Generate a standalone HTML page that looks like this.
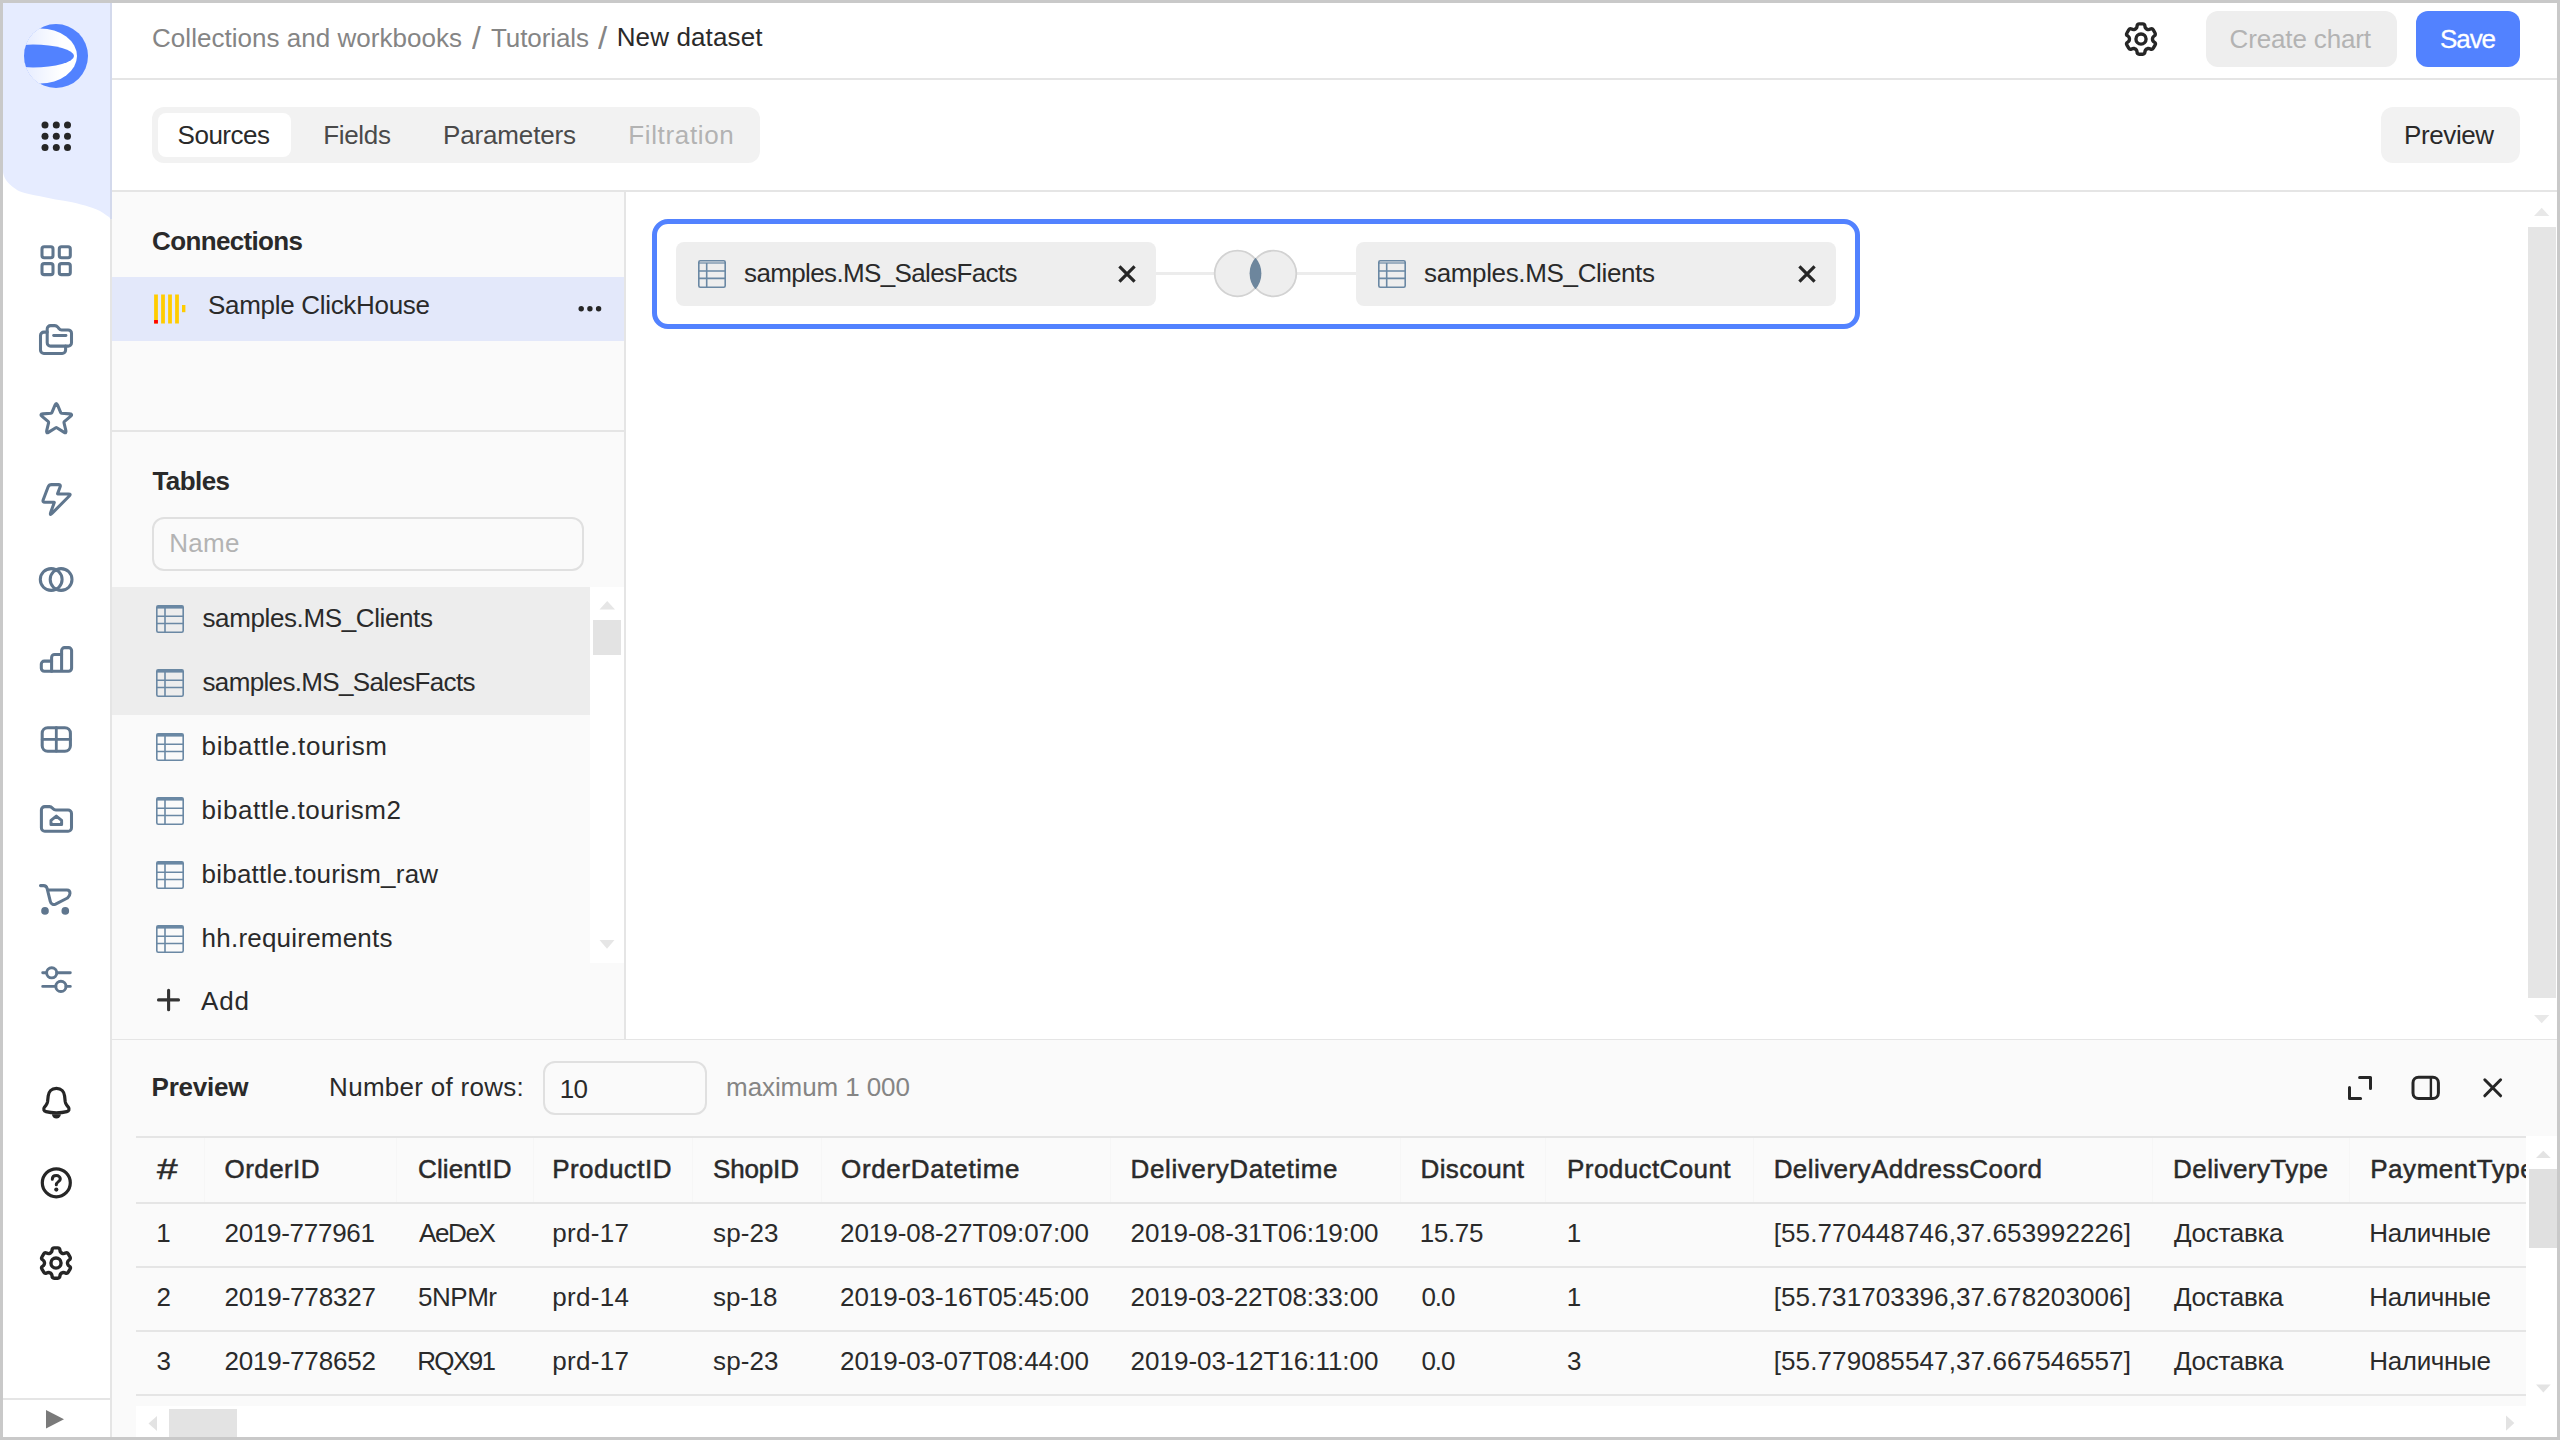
<!DOCTYPE html>
<html lang="en"><head><meta charset="utf-8"><title>New dataset</title>
<style>

*{box-sizing:border-box;margin:0;padding:0}
html,body{width:2560px;height:1440px;overflow:hidden;background:#c9c9c9}
body{font-family:"Liberation Sans","DejaVu Sans",sans-serif;font-size:26px;color:#262626}
#app{position:absolute;left:3px;top:3px;width:2554px;height:1434px;background:#fff;overflow:hidden}
/* everything inside is positioned in page coordinates: shift by -3 */
#app>*{position:absolute}
.abs{position:absolute}
.t{position:absolute;white-space:pre;margin-left:-3px;margin-top:-3px}
.b{position:absolute;margin-left:-3px;margin-top:-3px}
svg{position:absolute;overflow:visible;margin-left:-3px;margin-top:-3px}
.ln{background:#e5e5e5}

</style></head>
<body>
<div id="app">
<!-- sidebar -->
<div class="b" style="left:3px;top:3px;width:109px;height:1434px;background:#fff;border-right:2px solid #e5e5e5"></div>
<svg style="left:0;top:0" width="112" height="1440" viewBox="0 0 112 1440" fill="none">
<defs><linearGradient id="lg" x1="24" y1="0" x2="62" y2="0" gradientUnits="userSpaceOnUse"><stop offset="0" stop-color="#e6ecff"/><stop offset="1" stop-color="#ffffff"/></linearGradient><clipPath id="lc"><circle cx="56" cy="56" r="32"/></clipPath></defs>
<path d="M3 166C3.1 167.3 2.8 171.5 3.4 174C4.0 176.5 5.0 178.7 6.7 181C8.4 183.3 11.3 185.9 13.9 187.8C16.5 189.7 18.0 190.8 22.2 192.2C26.4 193.6 33.3 194.9 38.9 196.1C44.5 197.3 50.0 198.4 55.6 199.4C61.2 200.4 66.7 201.0 72.2 202.2C77.8 203.4 84.3 205.2 88.9 206.7C93.5 208.2 96.2 209.0 100 211.1C103.8 213.2 110.0 218.0 112 219.4V3H3Z" fill="#e6ecff"/>
<rect x="110" y="3" width="2" height="216" fill="#d3d9ec"/>
<g clip-path="url(#lc)"><rect x="24" y="24" width="64" height="64" fill="#5282ff"/><rect x="24" y="24" width="16.500" height="64" fill="url(#lg)"/><ellipse cx="40" cy="56" rx="37" ry="27.500" fill="url(#lg)"/><ellipse cx="33" cy="56" rx="41" ry="11.400" fill="#5282ff"/></g>
<circle cx="45" cy="125" r="3.5" fill="#262626"/>
<circle cx="56.3" cy="125" r="3.5" fill="#262626"/>
<circle cx="67.5" cy="125" r="3.5" fill="#262626"/>
<circle cx="45" cy="136.3" r="3.5" fill="#262626"/>
<circle cx="56.3" cy="136.3" r="3.5" fill="#262626"/>
<circle cx="67.5" cy="136.3" r="3.5" fill="#262626"/>
<circle cx="45" cy="147.5" r="3.5" fill="#262626"/>
<circle cx="56.3" cy="147.5" r="3.5" fill="#262626"/>
<circle cx="67.5" cy="147.5" r="3.5" fill="#262626"/>
<g stroke="#5f768e" stroke-width="3.05" stroke-linecap="round" stroke-linejoin="round">
<rect x="42" y="246.7" width="11" height="11" rx="2.2"/>
<rect x="59.3" y="246.7" width="11" height="11" rx="2.2"/>
<rect x="42" y="263.6" width="11" height="11" rx="2.2"/>
<rect x="59.3" y="263.6" width="11" height="11" rx="2.2"/>
<path d="M50.6 325.600H54.9C56 325.600 56.9 326.100 57.6 326.900L58.9 328.500C59.6 329.400 60.5 329.900 61.6 329.900H68.1A3.4 3.4 0 0 1 71.5 333.300V342.700A3.4 3.400 0 0 1 68.1 346.100H50.6A3.4 3.400 0 0 1 47.2 342.700V329A3.4 3.400 0 0 1 50.6 325.600Z"/>
<path d="M47.2 332.100H43.900A3.4 3.400 0 0 0 40.5 335.500V350A3.4 3.400 0 0 0 43.9 353.400H62.2A3.4 3.400 0 0 0 65.6 350V346.100"/>
<path d="M53.6 335.500H66" stroke-width="2.800"/>
<path d="M55.01 405.05Q56.30 401.90 57.59 405.05L60.72 412.65Q60.94 413.21 61.54 413.25L69.74 413.87Q73.13 414.13 70.54 416.33L64.27 421.65Q63.81 422.04 63.96 422.62L65.90 430.62Q66.70 433.92 63.81 432.13L56.81 427.82Q56.30 427.50 55.79 427.82L48.79 432.13Q45.90 433.92 46.70 430.62L48.64 422.62Q48.79 422.04 48.33 421.65L42.06 416.33Q39.47 414.13 42.86 413.87L51.06 413.25Q51.66 413.21 51.88 412.65Z"/>
<path d="M48.07 487.03Q49.00 484.60 51.60 484.60L58.40 484.60Q61.00 484.60 60.08 487.03L57.61 493.62Q57.50 493.90 57.80 493.90L68.40 493.90Q71.40 493.90 69.28 496.03L52.22 513.17Q49.40 516.00 50.76 512.24L54.30 502.48Q54.40 502.20 54.10 502.20L44.90 502.20Q42.30 502.20 43.23 499.77Z"/>
<circle cx="51.2" cy="579.5" r="10.9"/><circle cx="61.1" cy="579.5" r="10.9"/>
<path d="M51.6 661.100H44.3A3 3 0 0 0 41.3 664.100V668.300A3 3 0 0 0 44.3 671.300H68.600A3 3 0 0 0 71.6 668.300V650.600A3 3 0 0 0 68.600 647.600H64.600A3 3 0 0 0 61.6 650.600V671.300"/>
<path d="M61.6 654.400H54.600A3 3 0 0 0 51.6 657.400V671.300"/>
<rect x="42.2" y="727.700" width="28.2" height="23.5" rx="5.500"/><path d="M56.3 727.700V751.200M42.2 739.400H70.400" stroke-width="2.800"/>
<path d="M44.8 806.600H49.5C50.6 806.600 51.6 807.100 52.3 807.900L53.100 808.800C53.8 809.600 54.8 810 55.9 810H68.100A3.4 3.400 0 0 1 71.5 813.400V827.800A3.4 3.400 0 0 1 68.100 831.200H44.8A3.4 3.400 0 0 1 41.4 827.800V810A3.4 3.400 0 0 1 44.8 806.600Z"/>
<path d="M51 824.600V820.400L56.3 816.100L61.6 820.400V824.600Z" stroke-width="3"/>
<path d="M40.5 885.600H43.600C45.6 885.600 46.6 886.600 47.100 888.400L50.3 901.400C51 904.200 53.3 905.200 55.6 904.100L67.5 898C69.2 896.600 70 895.200 70 893.300C70 891.200 68.8 890 67 890H47.600"/>
<circle cx="45" cy="910.900" r="2.3" fill="#5f768e"/><circle cx="65.3" cy="910.900" r="2.3" fill="#5f768e"/>
<g stroke-width="2.900"><path d="M42.7 972.800H46.600M56.800 972.800H70.300M42.7 986.400H55.800M66 986.400H70.300"/><circle cx="51.7" cy="972.800" r="5.100"/><circle cx="60.9" cy="986.400" r="5.100"/></g>
</g>
<g stroke="#262626" stroke-width="3.2" stroke-linecap="round" stroke-linejoin="round">
<path d="M56.4 1088.300C51.4 1088.300 48.6 1091.700 48.2 1096L47.6 1101.500C47.4 1103 46.9 1104 46 1105.200L44.4 1107.300C43 1109.200 43.8 1111 46 1111.600C49 1112.400 52.6 1112.800 56.4 1112.800C60.2 1112.800 63.8 1112.400 66.8 1111.600C69 1111 69.8 1109.200 68.4 1107.300L66.8 1105.200C65.9 1104 65.4 1103 65.2 1101.500L64.6 1096C64.2 1091.700 61.4 1088.300 56.4 1088.300Z"/>
<path d="M52 1114.200A4.4 4.400 0 0 0 60.8 1114.200Z" fill="#262626" stroke="none"/>
<circle cx="56.3" cy="1182.800" r="14"/>
<path d="M52.3 1179.300C52.3 1176.900 54 1175.600 56.3 1175.600C58.6 1175.600 60.3 1177 60.3 1179C60.3 1181.600 56.3 1181.800 56.3 1184.800" stroke-width="3"/>
<circle cx="56.3" cy="1189.600" r="2.100" fill="#262626" stroke="none"/>
</g>
<path transform="translate(38 1245) scale(2.25)" fill="#262626" fill-rule="evenodd" clip-rule="evenodd" d="M7.199 2H8.8a.2.2 0 0 1 .2.2c0 1.808 1.958 2.939 3.524 2.034a.199.199 0 0 1 .271.073l.802 1.388a.199.199 0 0 1-.073.272c-1.566.904-1.566 3.164 0 4.069a.199.199 0 0 1 .073.271l-.802 1.388a.199.199 0 0 1-.271.073C10.958 10.863 9 11.993 9 13.8a.2.2 0 0 1-.199.2H7.2a.199.199 0 0 1-.2-.2c0-1.808-1.958-2.938-3.524-2.034a.199.199 0 0 1-.272-.073l-.8-1.388a.199.199 0 0 1 .072-.271c1.566-.905 1.566-3.165 0-4.07a.199.199 0 0 1-.073-.271l.801-1.388a.199.199 0 0 1 .272-.073C5.042 5.138 7 4.007 7 2.2c0-.11.089-.199.199-.199ZM5.5 2.2c0-.94.76-1.7 1.699-1.7H8.8c.94 0 1.7.76 1.7 1.7a.85.85 0 0 0 1.274.735 1.699 1.699 0 0 1 2.32.622l.802 1.388c.469.813.19 1.851-.622 2.32a.85.85 0 0 0 0 1.472 1.7 1.7 0 0 1 .622 2.32l-.802 1.388a1.699 1.699 0 0 1-2.32.622.85.85 0 0 0-1.274.735c0 .939-.76 1.7-1.699 1.7H7.2a1.7 1.7 0 0 1-1.699-1.7.85.85 0 0 0-1.274-.735 1.698 1.698 0 0 1-2.32-.622l-.802-1.388a1.699 1.699 0 0 1 .622-2.32.85.85 0 0 0 0-1.471 1.699 1.699 0 0 1-.622-2.321l.801-1.388a1.699 1.699 0 0 1 2.32-.622A.85.85 0 0 0 5.5 2.2Zm4 5.8a1.5 1.5 0 1 1-3 0 1.5 1.5 0 0 1 3 0ZM11 8a3 3 0 1 1-6 0 3 3 0 0 1 6 0Z"/>
<rect x="3" y="1398" width="107" height="2" fill="#e5e5e5"/>
<path d="M46 1410L64 1419.300L46 1428.500Z" fill="#7a7a7a"/>
</svg>
<!-- header -->
<div class="b ln" style="left:112px;top:78px;width:2445px;height:2px;"></div>
<svg style="left:2123px;top:21px" width="36" height="36" viewBox="0 0 16 16"><path fill="#262626" fill-rule="evenodd" clip-rule="evenodd" d="M7.199 2H8.8a.2.2 0 0 1 .2.2c0 1.808 1.958 2.939 3.524 2.034a.199.199 0 0 1 .271.073l.802 1.388a.199.199 0 0 1-.073.272c-1.566.904-1.566 3.164 0 4.069a.199.199 0 0 1 .073.271l-.802 1.388a.199.199 0 0 1-.271.073C10.958 10.863 9 11.993 9 13.8a.2.2 0 0 1-.199.2H7.2a.199.199 0 0 1-.2-.2c0-1.808-1.958-2.938-3.524-2.034a.199.199 0 0 1-.272-.073l-.8-1.388a.199.199 0 0 1 .072-.271c1.566-.905 1.566-3.165 0-4.07a.199.199 0 0 1-.073-.271l.801-1.388a.199.199 0 0 1 .272-.073C5.042 5.138 7 4.007 7 2.2c0-.11.089-.199.199-.199ZM5.5 2.2c0-.94.76-1.7 1.699-1.7H8.8c.94 0 1.7.76 1.7 1.7a.85.85 0 0 0 1.274.735 1.699 1.699 0 0 1 2.32.622l.802 1.388c.469.813.19 1.851-.622 2.32a.85.85 0 0 0 0 1.472 1.7 1.7 0 0 1 .622 2.32l-.802 1.388a1.699 1.699 0 0 1-2.32.622.85.85 0 0 0-1.274.735c0 .939-.76 1.7-1.699 1.7H7.2a1.7 1.7 0 0 1-1.699-1.7.85.85 0 0 0-1.274-.735 1.698 1.698 0 0 1-2.32-.622l-.802-1.388a1.699 1.699 0 0 1 .622-2.32.85.85 0 0 0 0-1.471 1.699 1.699 0 0 1-.622-2.321l.801-1.388a1.699 1.699 0 0 1 2.32-.622A.85.85 0 0 0 5.5 2.2Zm4 5.8a1.5 1.5 0 1 1-3 0 1.5 1.5 0 0 1 3 0ZM11 8a3 3 0 1 1-6 0 3 3 0 0 1 6 0Z"/></svg>
<div class="b" style="left:2206px;top:11px;width:191px;height:56px;background:#eeeeee;border-radius:12px"></div>
<div class="b" style="left:2416px;top:11px;width:104px;height:56px;background:#5282ff;border-radius:12px"></div>
<!-- tabs -->
<div class="b" style="left:152px;top:107px;width:608px;height:56px;background:#f2f2f2;border-radius:12px"></div>
<div class="b" style="left:158px;top:113px;width:133px;height:44px;background:#fff;border-radius:8px"></div>
<div class="b" style="left:2381px;top:107px;width:139px;height:56px;background:#f2f2f2;border-radius:12px"></div>
<div class="b ln" style="left:112px;top:190px;width:2445px;height:2px;"></div>
<!-- left panel -->
<div class="b" style="left:112px;top:192px;width:512px;height:847px;background:#fafafa"></div>
<div class="b ln" style="left:624px;top:192px;width:2px;height:847px;"></div>
<div class="b" style="left:112px;top:277px;width:512px;height:64px;background:#e3e8fa"></div>
<svg style="left:154px;top:294px" width="32" height="30" viewBox="154 294 32 30"><rect x="154.1" y="294.500" width="3.800" height="29" fill="#ffcc00"/><rect x="161.1" y="294.500" width="3.800" height="29" fill="#ffcc00"/><rect x="168.1" y="294.500" width="3.800" height="29" fill="#ffcc00"/><rect x="175.1" y="294.500" width="3.800" height="29" fill="#ffcc00"/><rect x="182" y="305" width="3.400" height="7.200" fill="#ffcc00"/><rect x="154.1" y="320" width="3.800" height="3.500" fill="#ff0000"/></svg>
<svg style="left:576px;top:300px" width="28" height="18" viewBox="576 300 28 18"><circle cx="581.2" cy="308.800" r="2.700" fill="#262626"/><circle cx="589.9" cy="308.800" r="2.700" fill="#262626"/><circle cx="598.6" cy="308.800" r="2.700" fill="#262626"/></svg>
<div class="b ln" style="left:112px;top:430px;width:512px;height:2px;"></div>
<div class="b" style="left:152px;top:517px;width:432px;height:54px;border:2px solid #e0e0e0;border-radius:12px;background:#fafafa"></div>
<div class="b" style="left:112px;top:587px;width:478px;height:128px;background:#ededed"></div>
<div class="b" style="left:590px;top:587px;width:34px;height:376px;background:#fff"></div>
<div class="b" style="left:593px;top:620px;width:28px;height:35px;background:#e3e3e3"></div>
<svg style="left:590px;top:587px" width="34" height="376" viewBox="590 587 34 376"><path d="M599.5 609.600L607.2 601L615 609.600Z" fill="#e6e6e6"/><path d="M599.5 940L607 948.700L614.5 940Z" fill="#e6e6e6"/></svg>
<svg style="left:155.6px;top:605px" width="28" height="28" viewBox="0 0 28 28" fill="none" stroke="#6a88a4" stroke-width="1.600"><rect x=".8" y=".800" width="26.400" height="26.400" rx="1.500"/><path d="M.8 2.200H27.200" stroke-width="2.800"/><path d="M.8 11.200H27.200M.8 18.500H27.200M9 3V27.200"/></svg>
<svg style="left:155.6px;top:669px" width="28" height="28" viewBox="0 0 28 28" fill="none" stroke="#6a88a4" stroke-width="1.600"><rect x=".8" y=".800" width="26.400" height="26.400" rx="1.500"/><path d="M.8 2.200H27.200" stroke-width="2.800"/><path d="M.8 11.200H27.200M.8 18.500H27.200M9 3V27.200"/></svg>
<svg style="left:155.6px;top:733px" width="28" height="28" viewBox="0 0 28 28" fill="none" stroke="#6a88a4" stroke-width="1.600"><rect x=".8" y=".800" width="26.400" height="26.400" rx="1.500"/><path d="M.8 2.200H27.200" stroke-width="2.800"/><path d="M.8 11.200H27.200M.8 18.500H27.200M9 3V27.200"/></svg>
<svg style="left:155.6px;top:797px" width="28" height="28" viewBox="0 0 28 28" fill="none" stroke="#6a88a4" stroke-width="1.600"><rect x=".8" y=".800" width="26.400" height="26.400" rx="1.500"/><path d="M.8 2.200H27.200" stroke-width="2.800"/><path d="M.8 11.200H27.200M.8 18.500H27.200M9 3V27.200"/></svg>
<svg style="left:155.6px;top:861px" width="28" height="28" viewBox="0 0 28 28" fill="none" stroke="#6a88a4" stroke-width="1.600"><rect x=".8" y=".800" width="26.400" height="26.400" rx="1.500"/><path d="M.8 2.200H27.200" stroke-width="2.800"/><path d="M.8 11.200H27.200M.8 18.500H27.200M9 3V27.200"/></svg>
<svg style="left:155.6px;top:925px" width="28" height="28" viewBox="0 0 28 28" fill="none" stroke="#6a88a4" stroke-width="1.600"><rect x=".8" y=".800" width="26.400" height="26.400" rx="1.500"/><path d="M.8 2.200H27.200" stroke-width="2.800"/><path d="M.8 11.200H27.200M.8 18.500H27.200M9 3V27.200"/></svg>
<svg style="left:156px;top:988px" width="26" height="24" viewBox="156 988 26 24"><path d="M168.6 990.300V1009.700M158.500 999.900H178.500" stroke="#333333" stroke-width="3.100" stroke-linecap="round"/></svg>
<div class="b ln" style="left:112px;top:1039px;width:2445px;height:1px;"></div>
<!-- canvas -->
<div class="b" style="left:652px;top:219px;width:1208px;height:110px;border:5px solid #5282ff;border-radius:16px;background:#fff"></div>
<div class="b" style="left:676px;top:242px;width:480px;height:64px;background:#eeeeee;border-radius:8px"></div>
<div class="b" style="left:1356px;top:242px;width:480px;height:64px;background:#eeeeee;border-radius:8px"></div>
<div class="b" style="left:1156px;top:272px;width:200px;height:3px;background:#ececec"></div>
<svg style="left:698.4px;top:259.7px" width="28" height="28" viewBox="0 0 28 28" fill="none" stroke="#6a88a4" stroke-width="1.600"><rect x=".8" y=".800" width="26.400" height="26.400" rx="1.500"/><path d="M.8 3H27.200" stroke-width="1.200"/><path d="M.8 11H27.200M.8 18.400H27.200M8.700 3V27.200" stroke-width="1.600"/></svg>
<svg style="left:1378px;top:259.7px" width="28" height="28" viewBox="0 0 28 28" fill="none" stroke="#6a88a4" stroke-width="1.600"><rect x=".8" y=".800" width="26.400" height="26.400" rx="1.500"/><path d="M.8 3H27.200" stroke-width="1.200"/><path d="M.8 11H27.200M.8 18.400H27.200M8.700 3V27.200" stroke-width="1.600"/></svg>
<svg style="left:1115px;top:262px" width="24" height="24" viewBox="-12 -12 24 24"><path d="M-7.6 -7.6L7.6 7.6M7.6 -7.6L-7.6 7.6" stroke="#262626" stroke-width="3.2" stroke-linecap="butt"/></svg>
<svg style="left:1795px;top:262px" width="24" height="24" viewBox="-12 -12 24 24"><path d="M-7.6 -7.6L7.6 7.6M7.6 -7.6L-7.6 7.6" stroke="#262626" stroke-width="3.2" stroke-linecap="butt"/></svg>
<svg style="left:1210px;top:246px" width="92" height="56" viewBox="1210 246 92 56"><circle cx="1237.5" cy="273.500" r="22.800" fill="#eeeeee" stroke="#d2d2d2" stroke-width="1.800"/><circle cx="1273.5" cy="273.500" r="22.800" fill="#eeeeee" stroke="#d2d2d2" stroke-width="1.800"/><path d="M1255.5 257.800A23.900 23.900 0 0 1 1255.5 289.200A23.900 23.900 0 0 1 1255.5 257.800Z" fill="#6d869d"/></svg>
<div class="b" style="left:2528px;top:227px;width:28px;height:771px;background:#e5e5e5"></div>
<svg style="left:2528px;top:192px" width="29" height="848" viewBox="2528 192 29 848"><path d="M2534 216L2541.700 207.800L2549.300 216Z" fill="#e8e8e8"/><path d="M2534 1015L2541.700 1023.300L2549.300 1015Z" fill="#e8e8e8"/></svg>
<!-- preview panel -->
<div class="b" style="left:112px;top:1040px;width:2445px;height:397px;background:#fafafa"></div>
<div class="b" style="left:543px;top:1061px;width:164px;height:54px;border:2px solid #e0e0e0;border-radius:12px;background:#fafafa"></div>
<svg style="left:2340px;top:1070px" width="170" height="36" viewBox="2340 1070 170 36" fill="none" stroke="#262626" stroke-width="3" stroke-linecap="round" stroke-linejoin="round"><path d="M2359.600 1077.500H2370.500V1088.600M2349.500 1087.500V1098.500H2360.600"/><rect x="2413" y="1077.300" width="25.400" height="21.200" rx="5.500"/><path d="M2430.900 1077.300V1098.500" stroke-width="2.400"/><path d="M2484.800 1079.800L2500.600 1095.800M2500.600 1079.800L2484.800 1095.800"/></svg>
<div class="b" style="left:136px;top:1136px;width:2390px;height:2px;background:#e5e5e5"></div>
<div class="b" style="left:136px;top:1202px;width:2390px;height:2px;background:#e5e5e5"></div>
<div class="b" style="left:136px;top:1266px;width:2390px;height:2px;background:#e5e5e5"></div>
<div class="b" style="left:136px;top:1330px;width:2390px;height:2px;background:#e5e5e5"></div>
<div class="b" style="left:136px;top:1394px;width:2390px;height:2px;background:#e5e5e5"></div>
<div class="b" style="left:204px;top:1138px;width:1px;height:64px;background:#f6f6f6"></div>
<div class="b" style="left:396px;top:1138px;width:1px;height:64px;background:#f6f6f6"></div>
<div class="b" style="left:533px;top:1138px;width:1px;height:64px;background:#f6f6f6"></div>
<div class="b" style="left:692px;top:1138px;width:1px;height:64px;background:#f6f6f6"></div>
<div class="b" style="left:821px;top:1138px;width:1px;height:64px;background:#f6f6f6"></div>
<div class="b" style="left:1110px;top:1138px;width:1px;height:64px;background:#f6f6f6"></div>
<div class="b" style="left:1400px;top:1138px;width:1px;height:64px;background:#f6f6f6"></div>
<div class="b" style="left:1545px;top:1138px;width:1px;height:64px;background:#f6f6f6"></div>
<div class="b" style="left:1753px;top:1138px;width:1px;height:64px;background:#f6f6f6"></div>
<div class="b" style="left:2152px;top:1138px;width:1px;height:64px;background:#f6f6f6"></div>
<div class="b" style="left:2349px;top:1138px;width:1px;height:64px;background:#f6f6f6"></div>
<div class="b" style="left:2526px;top:1136px;width:31px;height:301px;background:#fff;z-index:3"></div>
<div class="b" style="left:136px;top:1406px;width:2390px;height:31px;background:#fff"></div>
<div class="b" style="left:2529px;top:1169px;width:28px;height:79px;background:#e0e0e0;z-index:4"></div>
<div class="b" style="left:169px;top:1409px;width:68px;height:28px;background:#e3e3e3"></div>
<svg style="left:136px;top:1136px;z-index:5" width="2421" height="301" viewBox="136 1136 2421 301"><g fill="#e3e3e3"><path d="M2536 1158L2543.300 1150.700L2550.700 1158Z"/><path d="M2536 1384.400L2543.300 1392.500L2550.700 1384.400Z"/><path d="M2506 1415.500L2514.400 1423L2506 1430.700Z"/><path d="M157 1416L148.500 1423.500L157 1431Z"/></g></svg>
<!-- text layer -->
<span class="t" id="t0" style="left:152.06px;top:25.2px;font-size:26px;line-height:26px;color:#858585;letter-spacing:0.027px;">Collections and workbooks</span>
<span class="t" id="t1" style="left:471.54px;top:23.0px;font-size:31px;line-height:31px;color:#858585;transform:scaleX(1.026);transform-origin:0 0;">/</span>
<span class="t" id="t2" style="left:490.94px;top:25.2px;font-size:26px;line-height:26px;color:#858585;letter-spacing:-0.087px;">Tutorials</span>
<span class="t" id="t3" style="left:598.00px;top:23.0px;font-size:31px;line-height:31px;color:#858585;transform:scaleX(1.067);transform-origin:0 0;">/</span>
<span class="t" id="t4" style="left:616.66px;top:23.6px;font-size:26px;line-height:26px;color:#2a2a2a;letter-spacing:0.131px;">New dataset</span>
<span class="t" id="t5" style="left:2229.60px;top:25.5px;font-size:26px;line-height:26px;color:#b3b3b3;letter-spacing:-0.153px;">Create chart</span>
<span class="t" id="t6" style="left:2440.08px;top:25.5px;font-size:26px;line-height:26px;color:#ffffff;-webkit-text-stroke:0.3px #ffffff;letter-spacing:-1.122px;">Save</span>
<span class="t" id="t7" style="left:177.60px;top:121.5px;font-size:26px;line-height:26px;color:#2a2a2a;letter-spacing:-0.498px;">Sources</span>
<span class="t" id="t8" style="left:323.14px;top:121.5px;font-size:26px;line-height:26px;color:#4a4a4a;letter-spacing:-0.300px;">Fields</span>
<span class="t" id="t9" style="left:443.10px;top:121.5px;font-size:26px;line-height:26px;color:#4a4a4a;letter-spacing:-0.166px;">Parameters</span>
<span class="t" id="t10" style="left:628.20px;top:121.5px;font-size:26px;line-height:26px;color:#b3b3b3;letter-spacing:0.660px;">Filtration</span>
<span class="t" id="t11" style="left:2404.10px;top:121.5px;font-size:26px;line-height:26px;color:#2a2a2a;letter-spacing:-0.414px;">Preview</span>
<span class="t" id="t12" style="left:152.08px;top:228.0px;font-size:26px;line-height:26px;color:#2a2a2a;font-weight:700;letter-spacing:-0.655px;">Connections</span>
<span class="t" id="t13" style="left:208.08px;top:292.0px;font-size:26px;line-height:26px;color:#2a2a2a;letter-spacing:-0.313px;">Sample ClickHouse</span>
<span class="t" id="t14" style="left:152.50px;top:467.8px;font-size:26px;line-height:26px;color:#2a2a2a;font-weight:700;letter-spacing:-0.591px;">Tables</span>
<span class="t" id="t15" style="left:169.20px;top:529.9px;font-size:26px;line-height:26px;color:#b3b3b3;letter-spacing:0.280px;">Name</span>
<span class="t" id="t16" style="left:202.50px;top:604.9px;font-size:26px;line-height:26px;color:#2a2a2a;letter-spacing:-0.385px;">samples.MS_Clients</span>
<span class="t" id="t17" style="left:202.50px;top:668.9px;font-size:26px;line-height:26px;color:#2a2a2a;letter-spacing:-0.655px;">samples.MS_SalesFacts</span>
<span class="t" id="t18" style="left:201.60px;top:732.9px;font-size:26px;line-height:26px;color:#2a2a2a;letter-spacing:0.600px;">bibattle.tourism</span>
<span class="t" id="t19" style="left:201.60px;top:796.9px;font-size:26px;line-height:26px;color:#2a2a2a;letter-spacing:0.538px;">bibattle.tourism2</span>
<span class="t" id="t20" style="left:201.60px;top:860.9px;font-size:26px;line-height:26px;color:#2a2a2a;letter-spacing:0.201px;">bibattle.tourism_raw</span>
<span class="t" id="t21" style="left:201.60px;top:924.9px;font-size:26px;line-height:26px;color:#2a2a2a;letter-spacing:0.215px;">hh.requirements</span>
<span class="t" id="t22" style="left:200.98px;top:988.0px;font-size:26px;line-height:26px;color:#2a2a2a;letter-spacing:0.837px;">Add</span>
<span class="t" id="t23" style="left:744.04px;top:259.5px;font-size:26px;line-height:26px;color:#2a2a2a;letter-spacing:-0.632px;">samples.MS_SalesFacts</span>
<span class="t" id="t24" style="left:1424.02px;top:259.5px;font-size:26px;line-height:26px;color:#2a2a2a;letter-spacing:-0.353px;">samples.MS_Clients</span>
<span class="t" id="t25" style="left:151.60px;top:1074.0px;font-size:26px;line-height:26px;color:#2a2a2a;font-weight:700;letter-spacing:-0.226px;">Preview</span>
<span class="t" id="t26" style="left:329.12px;top:1074.0px;font-size:26px;line-height:26px;color:#2a2a2a;letter-spacing:0.280px;">Number of rows:</span>
<span class="t" id="t27" style="left:559.68px;top:1075.5px;font-size:26px;line-height:26px;color:#2a2a2a;letter-spacing:-0.602px;">10</span>
<span class="t" id="t28" style="left:726.10px;top:1073.7px;font-size:26px;line-height:26px;color:#858585;letter-spacing:-0.096px;">maximum 1 000</span>
<span class="t" id="t29" style="left:157.44px;top:1154.1px;font-size:30px;line-height:30px;color:#2a2a2a;-webkit-text-stroke:0.5px #2a2a2a;transform:scaleX(1.239);transform-origin:0 0;">#</span>
<span class="t" id="t30" style="left:224.58px;top:1155.5px;font-size:26px;line-height:26px;color:#2a2a2a;-webkit-text-stroke:0.5px #2a2a2a;letter-spacing:0.405px;">OrderID</span>
<span class="t" id="t31" style="left:418.04px;top:1155.5px;font-size:26px;line-height:26px;color:#2a2a2a;-webkit-text-stroke:0.5px #2a2a2a;letter-spacing:0.137px;">ClientID</span>
<span class="t" id="t32" style="left:552.14px;top:1155.5px;font-size:26px;line-height:26px;color:#2a2a2a;-webkit-text-stroke:0.5px #2a2a2a;letter-spacing:0.464px;">ProductID</span>
<span class="t" id="t33" style="left:713.08px;top:1155.5px;font-size:26px;line-height:26px;color:#2a2a2a;-webkit-text-stroke:0.5px #2a2a2a;letter-spacing:-0.171px;">ShopID</span>
<span class="t" id="t34" style="left:841.00px;top:1155.5px;font-size:26px;line-height:26px;color:#2a2a2a;-webkit-text-stroke:0.5px #2a2a2a;letter-spacing:0.667px;">OrderDatetime</span>
<span class="t" id="t35" style="left:1130.62px;top:1155.5px;font-size:26px;line-height:26px;color:#2a2a2a;-webkit-text-stroke:0.5px #2a2a2a;letter-spacing:0.595px;">DeliveryDatetime</span>
<span class="t" id="t36" style="left:1420.60px;top:1155.5px;font-size:26px;line-height:26px;color:#2a2a2a;-webkit-text-stroke:0.5px #2a2a2a;letter-spacing:0.335px;">Discount</span>
<span class="t" id="t37" style="left:1567.08px;top:1155.5px;font-size:26px;line-height:26px;color:#2a2a2a;-webkit-text-stroke:0.5px #2a2a2a;letter-spacing:0.411px;">ProductCount</span>
<span class="t" id="t38" style="left:1773.66px;top:1155.5px;font-size:26px;line-height:26px;color:#2a2a2a;-webkit-text-stroke:0.5px #2a2a2a;letter-spacing:0.428px;">DeliveryAddressCoord</span>
<span class="t" id="t39" style="left:2173.08px;top:1155.5px;font-size:26px;line-height:26px;color:#2a2a2a;-webkit-text-stroke:0.5px #2a2a2a;letter-spacing:0.422px;">DeliveryType</span>
<span class="t" id="t40" style="left:2370.20px;top:1155.5px;font-size:26px;line-height:26px;color:#2a2a2a;-webkit-text-stroke:0.5px #2a2a2a;letter-spacing:0.550px;">PaymentType</span>
<span class="t" id="t41" style="left:156.18px;top:1219.8px;font-size:26px;line-height:26px;color:#2a2a2a;">1</span>
<span class="t" id="t42" style="left:224.58px;top:1219.8px;font-size:26px;line-height:26px;color:#2a2a2a;letter-spacing:-0.291px;">2019-777961</span>
<span class="t" id="t43" style="left:418.94px;top:1219.8px;font-size:26px;line-height:26px;color:#2a2a2a;letter-spacing:-1.338px;">AeDeX</span>
<span class="t" id="t44" style="left:552.14px;top:1219.8px;font-size:26px;line-height:26px;color:#2a2a2a;letter-spacing:0.325px;">prd-17</span>
<span class="t" id="t45" style="left:713.08px;top:1219.8px;font-size:26px;line-height:26px;color:#2a2a2a;letter-spacing:0.068px;">sp-23</span>
<span class="t" id="t46" style="left:840.10px;top:1219.8px;font-size:26px;line-height:26px;color:#2a2a2a;letter-spacing:-0.070px;">2019-08-27T09:07:00</span>
<span class="t" id="t47" style="left:1130.62px;top:1219.8px;font-size:26px;line-height:26px;color:#2a2a2a;letter-spacing:-0.124px;">2019-08-31T06:19:00</span>
<span class="t" id="t48" style="left:1419.70px;top:1219.8px;font-size:26px;line-height:26px;color:#2a2a2a;letter-spacing:-0.325px;">15.75</span>
<span class="t" id="t49" style="left:1566.70px;top:1219.8px;font-size:26px;line-height:26px;color:#2a2a2a;">1</span>
<span class="t" id="t50" style="left:1773.66px;top:1219.8px;font-size:26px;line-height:26px;color:#2a2a2a;letter-spacing:0.116px;">[55.770448746,37.653992226]</span>
<span class="t" id="t51" style="left:2173.92px;top:1219.8px;font-size:26px;line-height:26px;color:#2a2a2a;letter-spacing:-0.285px;">Доставка</span>
<span class="t" id="t52" style="left:2369.18px;top:1219.8px;font-size:26px;line-height:26px;color:#2a2a2a;letter-spacing:-0.315px;">Наличные</span>
<span class="t" id="t53" style="left:156.58px;top:1283.8px;font-size:26px;line-height:26px;color:#2a2a2a;">2</span>
<span class="t" id="t54" style="left:224.58px;top:1283.8px;font-size:26px;line-height:26px;color:#2a2a2a;letter-spacing:-0.195px;">2019-778327</span>
<span class="t" id="t55" style="left:418.04px;top:1283.8px;font-size:26px;line-height:26px;color:#2a2a2a;letter-spacing:-0.487px;">5NPMr</span>
<span class="t" id="t56" style="left:552.14px;top:1283.8px;font-size:26px;line-height:26px;color:#2a2a2a;letter-spacing:0.337px;">prd-14</span>
<span class="t" id="t57" style="left:713.08px;top:1283.8px;font-size:26px;line-height:26px;color:#2a2a2a;letter-spacing:-0.157px;">sp-18</span>
<span class="t" id="t58" style="left:840.10px;top:1283.8px;font-size:26px;line-height:26px;color:#2a2a2a;letter-spacing:-0.070px;">2019-03-16T05:45:00</span>
<span class="t" id="t59" style="left:1130.62px;top:1283.8px;font-size:26px;line-height:26px;color:#2a2a2a;letter-spacing:-0.124px;">2019-03-22T08:33:00</span>
<span class="t" id="t60" style="left:1421.50px;top:1283.8px;font-size:26px;line-height:26px;color:#2a2a2a;letter-spacing:-1.098px;">0.0</span>
<span class="t" id="t61" style="left:1566.70px;top:1283.8px;font-size:26px;line-height:26px;color:#2a2a2a;">1</span>
<span class="t" id="t62" style="left:1773.66px;top:1283.8px;font-size:26px;line-height:26px;color:#2a2a2a;letter-spacing:0.116px;">[55.731703396,37.678203006]</span>
<span class="t" id="t63" style="left:2173.92px;top:1283.8px;font-size:26px;line-height:26px;color:#2a2a2a;letter-spacing:-0.285px;">Доставка</span>
<span class="t" id="t64" style="left:2369.18px;top:1283.8px;font-size:26px;line-height:26px;color:#2a2a2a;letter-spacing:-0.315px;">Наличные</span>
<span class="t" id="t65" style="left:156.58px;top:1347.8px;font-size:26px;line-height:26px;color:#2a2a2a;">3</span>
<span class="t" id="t66" style="left:224.58px;top:1347.8px;font-size:26px;line-height:26px;color:#2a2a2a;letter-spacing:-0.195px;">2019-778652</span>
<span class="t" id="t67" style="left:417.14px;top:1347.8px;font-size:26px;line-height:26px;color:#2a2a2a;letter-spacing:-1.606px;">RQX91</span>
<span class="t" id="t68" style="left:552.14px;top:1347.8px;font-size:26px;line-height:26px;color:#2a2a2a;letter-spacing:0.325px;">prd-17</span>
<span class="t" id="t69" style="left:713.08px;top:1347.8px;font-size:26px;line-height:26px;color:#2a2a2a;letter-spacing:0.068px;">sp-23</span>
<span class="t" id="t70" style="left:840.10px;top:1347.8px;font-size:26px;line-height:26px;color:#2a2a2a;letter-spacing:-0.070px;">2019-03-07T08:44:00</span>
<span class="t" id="t71" style="left:1130.62px;top:1347.8px;font-size:26px;line-height:26px;color:#2a2a2a;letter-spacing:-0.016px;">2019-03-12T16:11:00</span>
<span class="t" id="t72" style="left:1421.50px;top:1347.8px;font-size:26px;line-height:26px;color:#2a2a2a;letter-spacing:-1.098px;">0.0</span>
<span class="t" id="t73" style="left:1567.08px;top:1347.8px;font-size:26px;line-height:26px;color:#2a2a2a;">3</span>
<span class="t" id="t74" style="left:1773.66px;top:1347.8px;font-size:26px;line-height:26px;color:#2a2a2a;letter-spacing:0.116px;">[55.779085547,37.667546557]</span>
<span class="t" id="t75" style="left:2173.92px;top:1347.8px;font-size:26px;line-height:26px;color:#2a2a2a;letter-spacing:-0.285px;">Доставка</span>
<span class="t" id="t76" style="left:2369.18px;top:1347.8px;font-size:26px;line-height:26px;color:#2a2a2a;letter-spacing:-0.315px;">Наличные</span>
</div>
</body></html>
